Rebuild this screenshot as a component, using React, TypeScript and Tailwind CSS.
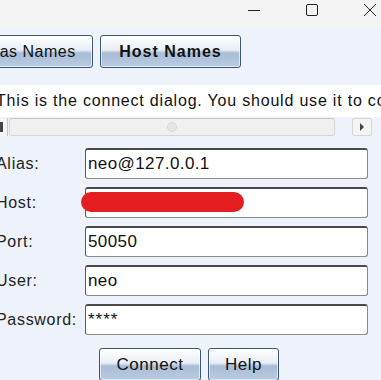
// App.tsx — connect dialog (cropped window)

const btn =
  "h-[33px] shrink-0 rounded-[3px] border border-[#3f5673] bg-[linear-gradient(to_bottom,#ffffff_0%,#e9eef6_45%,#a9bdd6_55%,#b9cbe1_100%)] text-[16px] text-[#111] tracking-[0.5px] flex items-center justify-center shadow-[inset_0_0_0_1px_rgba(255,255,255,0.6)]";

const field =
  "h-[31px] w-[283px] rounded-[3px] border border-[#8a8a8a] border-t-[#4a4a4a] border-t-2 border-l-[#5a5a5a] bg-white px-[2px] flex items-center text-[17px] tracking-[0.4px] text-[#111]";

function Row({ label, children }: { label: string; children: React.ReactNode }) {
  return (
    <div className="flex items-center h-[31px]">
      <div className="w-[89px] shrink-0 ml-[-4px] text-[16px] text-[#222] tracking-[0.7px]">{label}</div>
      {children}
    </div>
  );
}

export default function App() {
  return (
    <div
      className="w-[381px] h-[380px] overflow-hidden bg-[#eef2fa] flex flex-col"
      style={{ fontFamily: '"Liberation Sans", Arial, sans-serif' }}
    >
      {/* window title bar */}
      <div className="h-[28px] shrink-0 bg-[#f3f3f3] flex items-start pt-[3px] justify-end">
        <svg width="14" height="14" viewBox="0 0 14 14" className="mr-[44px]">
          <path d="M1 7.5h12" stroke="#222" strokeWidth="1" />
        </svg>
        <svg width="14" height="14" viewBox="0 0 14 14" className="mr-[44px]">
          <rect x="1.5" y="1.5" width="11" height="11" rx="1.5" fill="none" stroke="#222" strokeWidth="1" />
        </svg>
        <svg width="14" height="14" viewBox="0 0 14 14" className="mr-[4px]">
          <path d="M1 1l12 12M13 1L1 13" stroke="#222" strokeWidth="1" />
        </svg>
      </div>

      {/* tab-like buttons */}
      <div className="mt-[7px] flex gap-[7px]">
        <div className={`${btn} w-[130px] ml-[-37px]`}>Alias Names</div>
        <div className={`${btn} w-[141px] font-bold !tracking-[1px]`}>Host Names</div>
      </div>

      {/* description text area */}
      <div className="mt-[17px] flex">
        <div className="flex-1 flex flex-col">
          <div className="h-[32px] bg-white flex items-center overflow-hidden">
            <span className="whitespace-nowrap ml-[-4px] text-[16px] text-[#111] tracking-[0.8px]">
              This is the connect dialog. You should use it to connect to a server.
            </span>
          </div>
          <div className="h-[20px] flex items-center bg-[#eef2fa]">
            <div className="w-[8px] h-[18px] border-r border-[#c8c8c8] bg-[#f4f4f4] flex items-center">
              <div className="w-[3px] h-[10px] bg-[#444]" />
            </div>
            <div className="w-[326px] h-[18px] ml-[1px] rounded-[3px] border border-[#d6d6d6] border-t-[#c4c4c4] bg-[#f0f0f0] flex items-center justify-center">
              <div className="w-[10px] h-[10px] rounded-full border border-[#d8d8d8] bg-[#e6e6e6]" />
            </div>
            <div className="w-[17px]" />
            <div className="w-[20px] h-[18px] rounded-[2px] border border-[#d6d6d6] bg-[#f4f4f4] flex items-center justify-center">
              <svg width="6" height="10" viewBox="0 0 6 10">
                <path d="M1 1l4 4-4 4z" fill="#444" />
              </svg>
            </div>
          </div>
        </div>
        <div className="w-[8px] h-[32px] bg-[#f4f4f4] flex flex-col items-end justify-center gap-[6px] pr-[1px]">
          <svg width="6" height="5" viewBox="0 0 6 5">
            <path d="M0 4l3-3 3 3z" fill="#777" />
          </svg>
          <svg width="6" height="5" viewBox="0 0 6 5">
            <path d="M0 1l3 3 3-3z" fill="#777" />
          </svg>
        </div>
      </div>

      {/* form */}
      <div className="mt-[11px] flex flex-col gap-[8px]">
        <Row label="Alias:">
          <div className={field}>neo@127.0.0.1</div>
        </Row>
        <Row label="Host:">
          <div className={`${field} relative`}>
            <div className="absolute left-[-5px] top-[3px] w-[163px] h-[20px] rounded-full bg-[#e41e20]" />
          </div>
        </Row>
        <Row label="Port:">
          <div className={field}>50050</div>
        </Row>
        <Row label="User:">
          <div className={field}>neo</div>
        </Row>
        <Row label="Password:">
          <div className={`${field} !tracking-[1px]`}>****</div>
        </Row>
      </div>

      {/* action buttons */}
      <div className="mt-[13px] flex gap-[7px] ml-[99px]">
        <div className={`${btn} w-[102px] text-[17px]`}>Connect</div>
        <div className={`${btn} w-[71px] text-[17px]`}>Help</div>
      </div>
    </div>
  );
}
